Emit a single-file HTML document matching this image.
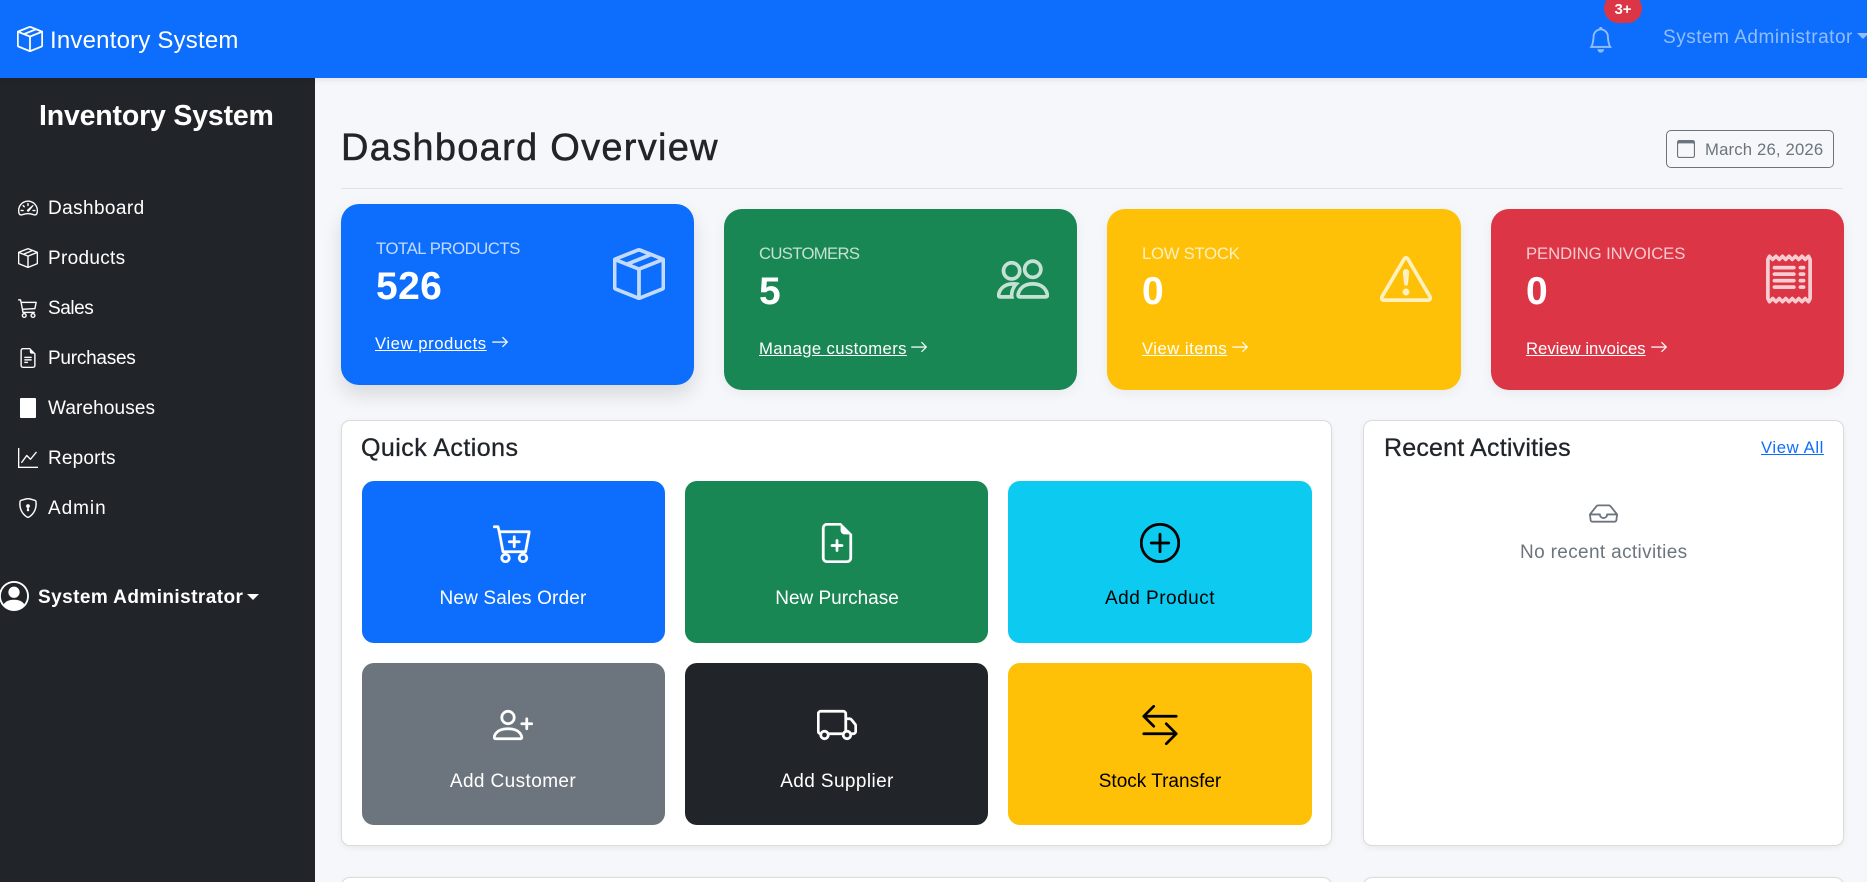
<!DOCTYPE html>
<html lang="en">
<head>
<meta charset="utf-8">
<title>Inventory System</title>
<style>
html,body{margin:0;padding:0;width:1867px;height:882px;overflow:hidden;background:#f5f7fb;font-family:"Liberation Sans",Arial,sans-serif;color:#212529}
#p{position:relative;width:1867px;height:882px;overflow:hidden}
.a{position:absolute}
.t{position:absolute;white-space:nowrap;line-height:30px;height:30px;margin-top:1px}
svg{position:absolute;display:block;fill:currentColor}
svg.s{stroke:currentColor;stroke-width:.12}
.nav{font-size:19px;color:#fff;left:48px}
.card{position:absolute;border-radius:18px;box-shadow:0 3px 12px rgba(0,0,0,.06)}
.lab{font-size:16.7px;color:rgba(255,255,255,.75)}
.val{font-size:39px;font-weight:bold;color:#fff}
.lnk{font-size:16.7px;color:#fff;text-decoration:underline}
.ico{color:rgba(255,255,255,.75)}
.wh{position:absolute;background:#fff;border:1px solid rgba(0,0,0,.14);border-radius:9px;box-shadow:0 2px 6px rgba(0,0,0,.06);box-sizing:border-box}
.btn{position:absolute;border-radius:12px;width:304px;height:162px}
.bl{font-size:19px;text-align:center;width:304px}
.h5{font-size:25px;color:#212529;-webkit-text-stroke:.3px #212529}
</style>
</head>
<body>
<div id="p">
<svg width="0" height="0" style="position:absolute">
<defs>
<symbol id="seam" viewBox="0 0 16 16"><path d="M8.186 1.113a.5.5 0 0 0-.372 0L1.846 3.5l2.404.961L10.404 2l-2.218-.887zm3.564 1.426L5.596 5 8 5.961 14.154 3.5l-2.404-.961zm3.25 1.7-6.5 2.6v7.922l6.5-2.6V4.24zM7.5 14.762V6.838L1 4.239v7.925l6.5 2.6zM7.443.184a1.5 1.5 0 0 1 1.114 0l7.129 2.852A.5.5 0 0 1 16 3.5v8.662a1 1 0 0 1-.629.928l-7.185 2.874a.5.5 0 0 1-.372 0L.63 13.09a1 1 0 0 1-.63-.928V3.5a.5.5 0 0 1 .314-.464L7.443.184z"/></symbol>
<symbol id="arr" viewBox="0 0 16 16"><path d="M1 8a.5.5 0 0 1 .5-.5h11.793l-3.147-3.146a.5.5 0 0 1 .708-.708l4 4a.5.5 0 0 1 0 .708l-4 4a.5.5 0 0 1-.708-.708L13.293 8.5H1.5A.5.5 0 0 1 1 8z"/></symbol>
</defs>
</svg>

<!-- sidebar -->
<div class="a" style="left:0;top:78px;width:315px;height:804px;background:#212529"></div>
<!-- navbar -->
<div class="a" style="left:0;top:0;width:1867px;height:78px;background:#0d6efd;box-shadow:0 2px 6px rgba(0,0,0,.08)"></div>

<svg class="s" style="left:17px;top:26px;color:#fff" width="26" height="26" viewBox="0 0 16 16"><use href="#seam"/></svg>
<div class="t" style="left:50px;top:25px;font-size:24px;color:#fff;letter-spacing:.2px">Inventory System</div>

<svg class="s" style="left:1588px;top:27px;color:rgba(255,255,255,.55)" width="25.5" height="25.5" viewBox="0 0 16 16"><path d="M8 16a2 2 0 0 0 2-2H6a2 2 0 0 0 2 2zM8 1.918l-.797.161A4.002 4.002 0 0 0 4 6c0 .628-.134 2.197-.459 3.742-.16.767-.376 1.566-.663 2.258h10.244c-.287-.692-.502-1.49-.663-2.258C12.134 8.197 12 6.628 12 6a4.002 4.002 0 0 0-3.203-3.92L8 1.917zM14.22 12c.223.447.481.801.78 1H1c.299-.199.557-.553.78-1C2.68 10.2 3 6.88 3 6c0-2.42 1.72-4.44 4.005-4.901a1 1 0 1 1 1.99 0A5.002 5.002 0 0 1 13 6c0 .88.32 4.2 1.22 6z"/></svg>
<div class="a" style="left:1604px;top:-6px;width:38px;height:29px;background:#dc3545;border-radius:15px"></div>
<div class="t" style="left:1604px;top:-6px;width:38px;text-align:center;font-size:15px;font-weight:bold;color:#fff">3+</div>
<div class="t" style="left:1663px;top:22px;font-size:19px;color:rgba(255,255,255,.55);letter-spacing:.52px">System Administrator</div>
<div class="a" style="left:1857px;top:33px;width:0;height:0;border-top:6px solid rgba(255,255,255,.55);border-left:6px solid transparent;border-right:6px solid transparent"></div>

<!-- sidebar content -->
<div class="t" style="left:39px;top:100px;font-size:28.5px;color:#fff;font-weight:bold;letter-spacing:-.18px">Inventory System</div>

<svg class="s" style="left:18px;top:198px;color:#fff" width="20" height="20" viewBox="0 0 16 16"><path d="M8 4a.5.5 0 0 1 .5.5V6a.5.5 0 0 1-1 0V4.5A.5.5 0 0 1 8 4zM3.732 5.732a.5.5 0 0 1 .707 0l.915.914a.5.5 0 1 1-.708.708l-.914-.915a.5.5 0 0 1 0-.707zM2 10a.5.5 0 0 1 .5-.5h1.586a.5.5 0 0 1 0 1H2.5A.5.5 0 0 1 2 10zm9.5 0a.5.5 0 0 1 .5-.5h1.5a.5.5 0 0 1 0 1H12a.5.5 0 0 1-.5-.5zm.754-4.246a.389.389 0 0 0-.527-.02L7.547 9.31a.91.91 0 1 0 1.302 1.258l3.434-4.297a.389.389 0 0 0-.029-.518z"/><path d="M0 10a8 8 0 1 1 15.547 2.661c-.442 1.253-1.845 1.602-2.932 1.25C11.309 13.488 9.475 13 8 13c-1.474 0-3.31.488-4.615.911-1.087.352-2.49.003-2.932-1.25A7.988 7.988 0 0 1 0 10zm8-7a7 7 0 0 0-6.603 9.329c.203.575.923.876 1.68.63C4.397 12.533 6.358 12 8 12s3.604.532 4.923.96c.757.245 1.477-.056 1.68-.631A7 7 0 0 0 8 3z"/></svg>
<div class="t nav" style="top:193px;letter-spacing:.4px">Dashboard</div>

<svg class="s" style="left:18px;top:248px;color:#fff" width="20" height="20" viewBox="0 0 16 16"><use href="#seam"/></svg>
<div class="t nav" style="top:243px;letter-spacing:.3px">Products</div>

<svg class="s" style="left:18px;top:298px;color:#fff" width="20" height="20" viewBox="0 0 16 16"><path d="M0 1.5A.5.5 0 0 1 .5 1H2a.5.5 0 0 1 .485.379L2.89 3H14.5a.5.5 0 0 1 .49.598l-1 5a.5.5 0 0 1-.465.401l-9.397.472L4.415 11H13a.5.5 0 0 1 0 1H4a.5.5 0 0 1-.491-.408L2.01 3.607 1.61 2H.5a.5.5 0 0 1-.5-.5zM3.102 4l.84 4.479 9.144-.459L13.89 4H3.102zM5 12a2 2 0 1 0 0 4 2 2 0 0 0 0-4zm7 0a2 2 0 1 0 0 4 2 2 0 0 0 0-4zm-7 1a1 1 0 1 1 0 2 1 1 0 0 1 0-2zm7 0a1 1 0 1 1 0 2 1 1 0 0 1 0-2z"/></svg>
<div class="t nav" style="top:293px;letter-spacing:-.45px">Sales</div>

<svg class="s" style="left:18px;top:348px;color:#fff" width="20" height="20" viewBox="0 0 16 16"><path d="M5.5 7a.5.5 0 0 0 0 1h5a.5.5 0 0 0 0-1h-5zM5 9.5a.5.5 0 0 1 .5-.5h5a.5.5 0 0 1 0 1h-5a.5.5 0 0 1-.5-.5zm0 2a.5.5 0 0 1 .5-.5h2a.5.5 0 0 1 0 1h-2a.5.5 0 0 1-.5-.5z"/><path d="M9.5 0H4a2 2 0 0 0-2 2v12a2 2 0 0 0 2 2h8a2 2 0 0 0 2-2V4.5L9.5 0zm0 1v2A1.5 1.5 0 0 0 11 4.5h2V14a1 1 0 0 1-1 1H4a1 1 0 0 1-1-1V2a1 1 0 0 1 1-1h5.5z"/></svg>
<div class="t nav" style="top:343px;letter-spacing:-.25px">Purchases</div>

<div class="a" style="left:20px;top:398px;width:16px;height:20px;background:#fff;border-radius:1px"></div>
<div class="t nav" style="top:393px;letter-spacing:.12px">Warehouses</div>

<svg class="s" style="left:18px;top:448px;color:#fff" width="20" height="20" viewBox="0 0 16 16"><path d="M0 0h1v15h15v1H0V0Zm14.817 3.113a.5.5 0 0 1 .07.704l-4.5 5.5a.5.5 0 0 1-.74.037L7.06 6.767l-3.656 5.027a.5.5 0 0 1-.808-.588l4-5.5a.5.5 0 0 1 .758-.06l2.609 2.61 4.15-5.073a.5.5 0 0 1 .704-.07Z"/></svg>
<div class="t nav" style="top:443px;letter-spacing:.17px">Reports</div>

<svg class="s" style="left:18px;top:498px;color:#fff" width="20" height="20" viewBox="0 0 16 16"><path d="M5.338 1.59a61.44 61.44 0 0 0-2.837.856.481.481 0 0 0-.328.39c-.554 4.157.726 7.19 2.253 9.188a10.725 10.725 0 0 0 2.287 2.233c.346.244.652.42.893.533.12.057.218.095.293.118a.55.55 0 0 0 .101.025.615.615 0 0 0 .1-.025c.076-.023.174-.061.294-.118.24-.113.547-.29.893-.533a10.726 10.726 0 0 0 2.287-2.233c1.527-1.997 2.807-5.031 2.253-9.188a.48.48 0 0 0-.328-.39c-.651-.213-1.75-.56-2.837-.855C9.552 1.29 8.531 1.067 8 1.067c-.53 0-1.552.223-2.662.524zM5.072.56C6.157.265 7.31 0 8 0s1.843.265 2.928.56c1.11.3 2.229.655 2.887.87a1.54 1.54 0 0 1 1.044 1.262c.596 4.477-.787 7.795-2.465 9.99a11.775 11.775 0 0 1-2.517 2.453 7.159 7.159 0 0 1-1.048.625c-.28.132-.581.24-.829.24s-.548-.108-.829-.24a7.158 7.158 0 0 1-1.048-.625 11.777 11.777 0 0 1-2.517-2.453C1.928 10.487.545 7.169 1.141 2.692A1.54 1.54 0 0 1 2.185 1.43 62.456 62.456 0 0 1 5.072.56z"/><path d="M9.5 6.5a1.5 1.5 0 0 1-1 1.415l.385 1.99a.5.5 0 0 1-.491.595h-.788a.5.5 0 0 1-.49-.595l.384-1.99a1.5 1.5 0 1 1 2-1.415z"/></svg>
<div class="t nav" style="top:493px;letter-spacing:.95px">Admin</div>

<svg style="left:-1px;top:581px;color:#fff" width="30" height="30" viewBox="0 0 16 16"><path d="M11 6a3 3 0 1 1-6 0 3 3 0 0 1 6 0z"/><path fill-rule="evenodd" d="M0 8a8 8 0 1 1 16 0A8 8 0 0 1 0 8zm8-7a7 7 0 0 0-5.468 11.37C3.242 11.226 4.805 10 8 10s4.757 1.225 5.468 2.37A7 7 0 0 0 8 1z"/></svg>
<div class="t" style="left:38px;top:582px;font-size:19px;font-weight:bold;color:#fff;letter-spacing:.43px">System Administrator</div>
<div class="a" style="left:247px;top:594px;width:0;height:0;border-top:6px solid #fff;border-left:6px solid transparent;border-right:6px solid transparent"></div>

<!-- header -->
<div class="t" style="left:341px;top:132px;font-size:38px;color:#212529;letter-spacing:1.28px;-webkit-text-stroke:.5px #212529">Dashboard Overview</div>
<div class="a" style="left:341px;top:188px;width:1502px;height:1px;background:#dee2e6"></div>
<div class="a" style="left:1666px;top:130px;width:168px;height:38px;border:1px solid #6c757d;border-radius:5px;box-sizing:border-box"></div>
<svg style="left:1677px;top:140px;color:#6c757d" width="18" height="18" viewBox="0 0 16 16"><path d="M14 0H2a2 2 0 0 0-2 2v12a2 2 0 0 0 2 2h12a2 2 0 0 0 2-2V2a2 2 0 0 0-2-2zM1 3.857C1 3.384 1.448 3 2 3h12c.552 0 1 .384 1 .857v10.286c0 .473-.448.857-1 .857H2c-.552 0-1-.384-1-.857V3.857z"/></svg>
<div class="t" style="left:1705px;top:134px;font-size:16.7px;color:#6c757d;letter-spacing:.17px">March 26, 2026</div>

<!-- stat cards -->
<div class="card" style="left:341px;top:204px;width:353px;height:181px;background:#0d6efd;box-shadow:0 10px 20px rgba(0,0,0,.12)"></div>
<div class="t lab" style="left:376px;top:233px;letter-spacing:-.42px">TOTAL PRODUCTS</div>
<div class="t val" style="left:376px;top:271px;letter-spacing:.4px">526</div>
<div class="t lnk" style="left:375px;top:328px;letter-spacing:.55px">View products</div>
<svg class="s" style="left:491px;top:333px;color:#fff" width="18" height="18" viewBox="0 0 16 16"><use href="#arr"/></svg>
<svg class="ico s" style="left:613px;top:248px" width="52" height="52" viewBox="0 0 16 16"><use href="#seam"/></svg>

<div class="card" style="left:724px;top:209px;width:353px;height:181px;background:#198754"></div>
<div class="t lab" style="left:759px;top:238px;letter-spacing:-.66px">CUSTOMERS</div>
<div class="t val" style="left:759px;top:276px">5</div>
<div class="t lnk" style="left:759px;top:333px;letter-spacing:.37px">Manage customers</div>
<svg class="s" style="left:910px;top:338px;color:#fff" width="18" height="18" viewBox="0 0 16 16"><use href="#arr"/></svg>
<svg class="ico s" style="left:997px;top:253px" width="52" height="52" viewBox="0 0 16 16"><path d="M15 14s1 0 1-1-1-4-5-4-5 3-5 4 1 1 1 1h8Zm-7.978-1A.261.261 0 0 1 7 12.996c.001-.264.167-1.03.76-1.72C8.312 10.629 9.282 10 11 10c1.717 0 2.687.63 3.24 1.276.593.69.758 1.457.76 1.72l-.008.002a.274.274 0 0 1-.014.002H7.022ZM11 7a2 2 0 1 0 0-4 2 2 0 0 0 0 4Zm3-2a3 3 0 1 1-6 0 3 3 0 0 1 6 0ZM6.936 9.28a5.88 5.88 0 0 0-1.23-.247A7.35 7.35 0 0 0 5 9c-4 0-5 3-5 4 0 .667.333 1 1 1h4.216A2.238 2.238 0 0 1 5 13c0-1.01.377-2.042 1.09-2.904.243-.294.526-.569.846-.816ZM4.92 10A5.493 5.493 0 0 0 4 13H1c0-.26.164-1.03.76-1.724.545-.636 1.492-1.256 3.16-1.275ZM1.5 5.5a3 3 0 1 1 6 0 3 3 0 0 1-6 0Zm3-2a2 2 0 1 0 0 4 2 2 0 0 0 0-4Z"/></svg>

<div class="card" style="left:1107px;top:209px;width:354px;height:181px;background:#ffc107"></div>
<div class="t lab" style="left:1142px;top:238px;letter-spacing:-.26px">LOW STOCK</div>
<div class="t val" style="left:1142px;top:276px">0</div>
<div class="t lnk" style="left:1142px;top:333px;letter-spacing:.48px">View items</div>
<svg class="s" style="left:1231px;top:338px;color:#fff" width="18" height="18" viewBox="0 0 16 16"><use href="#arr"/></svg>
<svg class="ico s" style="left:1380px;top:253px" width="52" height="52" viewBox="0 0 16 16"><path d="M7.938 2.016A.13.13 0 0 1 8.002 2a.13.13 0 0 1 .063.016.146.146 0 0 1 .054.057l6.857 11.667c.036.06.035.124.002.183a.163.163 0 0 1-.054.06.116.116 0 0 1-.066.017H1.146a.115.115 0 0 1-.066-.017.163.163 0 0 1-.054-.06.176.176 0 0 1 .002-.183L7.884 2.073a.147.147 0 0 1 .054-.057zm1.044-.45a1.13 1.13 0 0 0-1.96 0L.165 13.233c-.457.778.091 1.767.98 1.767h13.713c.889 0 1.438-.99.98-1.767L8.982 1.566z"/><path d="M7.002 12a1 1 0 1 1 2 0 1 1 0 0 1-2 0zM7.1 5.995a.905.905 0 1 1 1.8 0l-.35 3.507a.552.552 0 0 1-1.1 0L7.1 5.995z"/></svg>

<div class="card" style="left:1491px;top:209px;width:353px;height:181px;background:#dc3545"></div>
<div class="t lab" style="left:1526px;top:238px;letter-spacing:-.07px">PENDING INVOICES</div>
<div class="t val" style="left:1526px;top:276px">0</div>
<div class="t lnk" style="left:1526px;top:333px">Review invoices</div>
<svg class="s" style="left:1650px;top:338px;color:#fff" width="18" height="18" viewBox="0 0 16 16"><use href="#arr"/></svg>
<svg class="ico s" style="left:1763px;top:253px" width="52" height="52" viewBox="0 0 16 16"><path d="M1.92.506a.5.5 0 0 1 .434.14L3 1.293l.646-.647a.5.5 0 0 1 .708 0L5 1.293l.646-.647a.5.5 0 0 1 .708 0L7 1.293l.646-.647a.5.5 0 0 1 .708 0L9 1.293l.646-.647a.5.5 0 0 1 .708 0l.646.647.646-.647a.5.5 0 0 1 .708 0l.646.647.646-.647a.5.5 0 0 1 .801.13l.5 1A.5.5 0 0 1 15 2v12a.5.5 0 0 1-.053.224l-.5 1a.5.5 0 0 1-.8.13L13 14.707l-.646.647a.5.5 0 0 1-.708 0L11 14.707l-.646.647a.5.5 0 0 1-.708 0L9 14.707l-.646.647a.5.5 0 0 1-.708 0L7 14.707l-.646.647a.5.5 0 0 1-.708 0L5 14.707l-.646.647a.5.5 0 0 1-.708 0L3 14.707l-.646.647a.5.5 0 0 1-.801-.13l-.5-1A.5.5 0 0 1 1 14V2a.5.5 0 0 1 .053-.224l.5-1a.5.5 0 0 1 .367-.27zm.217 1.338L2 2.118v11.764l.137.274.51-.51a.5.5 0 0 1 .707 0l.646.647.646-.646a.5.5 0 0 1 .708 0l.646.646.646-.646a.5.5 0 0 1 .708 0l.646.646.646-.646a.5.5 0 0 1 .708 0l.646.646.646-.646a.5.5 0 0 1 .708 0l.646.646.646-.646a.5.5 0 0 1 .708 0l.509.509.137-.274V2.118l-.137-.274-.51.51a.5.5 0 0 1-.707 0L12 1.707l-.646.647a.5.5 0 0 1-.708 0L10 1.707l-.646.647a.5.5 0 0 1-.708 0L8 1.707l-.646.647a.5.5 0 0 1-.708 0L6 1.707l-.646.647a.5.5 0 0 1-.708 0L4 1.707l-.646.647a.5.5 0 0 1-.708 0l-.509-.51z"/><path d="M3 4.5a.5.5 0 0 1 .5-.5h6a.5.5 0 1 1 0 1h-6a.5.5 0 0 1-.5-.5zm0 2a.5.5 0 0 1 .5-.5h6a.5.5 0 1 1 0 1h-6a.5.5 0 0 1-.5-.5zm0 2a.5.5 0 0 1 .5-.5h6a.5.5 0 1 1 0 1h-6a.5.5 0 0 1-.5-.5zm0 2a.5.5 0 0 1 .5-.5h6a.5.5 0 0 1 0 1h-6a.5.5 0 0 1-.5-.5zm8-6a.5.5 0 0 1 .5-.5h1a.5.5 0 0 1 0 1h-1a.5.5 0 0 1-.5-.5zm0 2a.5.5 0 0 1 .5-.5h1a.5.5 0 0 1 0 1h-1a.5.5 0 0 1-.5-.5zm0 2a.5.5 0 0 1 .5-.5h1a.5.5 0 0 1 0 1h-1a.5.5 0 0 1-.5-.5zm0 2a.5.5 0 0 1 .5-.5h1a.5.5 0 0 1 0 1h-1a.5.5 0 0 1-.5-.5z"/></svg>

<!-- quick actions -->
<div class="wh" style="left:341px;top:420px;width:991px;height:426px"></div>
<div class="t h5" style="left:361px;top:432px;letter-spacing:.46px">Quick Actions</div>

<div class="btn" style="left:362px;top:481px;background:#0d6efd;width:303px"></div>
<svg class="s" style="left:493px;top:523px;color:#fff" width="40" height="40" viewBox="0 0 16 16"><path d="M9 5.5a.5.5 0 0 0-1 0V7H6.5a.5.5 0 0 0 0 1H8v1.5a.5.5 0 0 0 1 0V8h1.5a.5.5 0 0 0 0-1H9V5.5z"/><path d="M.5 1a.5.5 0 0 0 0 1h1.11l.401 1.607 1.498 7.985A.5.5 0 0 0 4 12h1a2 2 0 1 0 0 4 2 2 0 0 0 0-4h7a2 2 0 1 0 0 4 2 2 0 0 0 0-4h1a.5.5 0 0 0 .491-.408l1.5-8A.5.5 0 0 0 14.5 3H2.89l-.405-1.621A.5.5 0 0 0 2 1H.5zm3.915 10L3.102 4h10.796l-1.313 7h-8.17zM6 14a1 1 0 1 1-2 0 1 1 0 0 1 2 0zm7 0a1 1 0 1 1-2 0 1 1 0 0 1 2 0z"/></svg>
<div class="t bl" style="left:361px;top:583px;color:#fff;letter-spacing:.15px">New Sales Order</div>

<div class="btn" style="left:685px;top:481px;background:#198754;width:303px"></div>
<svg class="s" style="left:817px;top:523px;color:#fff" width="40" height="40" viewBox="0 0 16 16"><path d="M8 6.5a.5.5 0 0 1 .5.5v1.5H10a.5.5 0 0 1 0 1H8.5V11a.5.5 0 0 1-1 0V9.5H6a.5.5 0 0 1 0-1h1.5V7a.5.5 0 0 1 .5-.5z"/><path d="M14 4.5V14a2 2 0 0 1-2 2H4a2 2 0 0 1-2-2V2a2 2 0 0 1 2-2h5.5L14 4.5zm-3 0A1.5 1.5 0 0 1 9.5 3V1H4a1 1 0 0 0-1 1v12a1 1 0 0 0 1 1h8a1 1 0 0 0 1-1V4.5h-2z"/></svg>
<div class="t bl" style="left:685px;top:583px;color:#fff">New Purchase</div>

<div class="btn" style="left:1008px;top:481px;background:#0dcaf0"></div>
<svg class="s" style="left:1140px;top:523px;color:#000" width="40" height="40" viewBox="0 0 16 16"><path d="M8 15A7 7 0 1 1 8 1a7 7 0 0 1 0 14zm0 1A8 8 0 1 0 8 0a8 8 0 0 0 0 16z"/><path d="M8 4a.5.5 0 0 1 .5.5v3h3a.5.5 0 0 1 0 1h-3v3a.5.5 0 0 1-1 0v-3h-3a.5.5 0 0 1 0-1h3v-3A.5.5 0 0 1 8 4z"/></svg>
<div class="t bl" style="left:1008px;top:583px;color:#000;letter-spacing:.5px">Add Product</div>

<div class="btn" style="left:362px;top:663px;background:#6c757d;width:303px"></div>
<svg class="s" style="left:493px;top:705px;color:#fff" width="40" height="40" viewBox="0 0 16 16"><path d="M6 8a3 3 0 1 0 0-6 3 3 0 0 0 0 6zm2-3a2 2 0 1 1-4 0 2 2 0 0 1 4 0zm4 8c0 1-1 1-1 1H1s-1 0-1-1 1-4 6-4 6 3 6 4zm-1-.004c-.001-.246-.154-.986-.832-1.664C9.516 10.68 8.289 10 6 10c-2.29 0-3.516.68-4.168 1.332-.678.678-.83 1.418-.832 1.664h10z"/><path d="M13.5 5a.5.5 0 0 1 .5.5V7h1.5a.5.5 0 0 1 0 1H14v1.5a.5.5 0 0 1-1 0V8h-1.5a.5.5 0 0 1 0-1H13V5.5a.5.5 0 0 1 .5-.5z"/></svg>
<div class="t bl" style="left:361px;top:766px;color:#fff;letter-spacing:.4px">Add Customer</div>

<div class="btn" style="left:685px;top:663px;background:#212529;width:303px"></div>
<svg class="s" style="left:817px;top:705px;color:#fff" width="40" height="40" viewBox="0 0 16 16"><path d="M0 3.5A1.5 1.5 0 0 1 1.5 2h9A1.5 1.5 0 0 1 12 3.5V5h1.02a1.5 1.5 0 0 1 1.17.563l1.481 1.85a1.5 1.5 0 0 1 .329.938V10.5a1.5 1.5 0 0 1-1.5 1.5H14a2 2 0 1 1-4 0H5a2 2 0 1 1-3.998-.085A1.5 1.5 0 0 1 0 10.5v-7zm1.294 7.456A1.999 1.999 0 0 1 4.732 11h5.536a2.01 2.01 0 0 1 .732-.732V3.5a.5.5 0 0 0-.5-.5h-9a.5.5 0 0 0-.5.5v7a.5.5 0 0 0 .294.456zM12 10a2 2 0 0 1 1.732 1h.768a.5.5 0 0 0 .5-.5V8.35a.5.5 0 0 0-.11-.312l-1.48-1.85A.5.5 0 0 0 13.02 6H12v4zm-9 1a1 1 0 1 0 0 2 1 1 0 0 0 0-2zm9 0a1 1 0 1 0 0 2 1 1 0 0 0 0-2z"/></svg>
<div class="t bl" style="left:685px;top:766px;color:#fff;letter-spacing:.4px">Add Supplier</div>

<div class="btn" style="left:1008px;top:663px;background:#ffc107"></div>
<svg class="s" style="left:1140px;top:705px;color:#000" width="40" height="40" viewBox="0 0 16 16"><path d="M1 11.5a.5.5 0 0 0 .5.5h11.793l-3.147 3.146a.5.5 0 0 0 .708.708l4-4a.5.5 0 0 0 0-.708l-4-4a.5.5 0 0 0-.708.708L13.293 11H1.5a.5.5 0 0 0-.5.5zm14-7a.5.5 0 0 1-.5.5H2.707l3.147 3.146a.5.5 0 1 1-.708.708l-4-4a.5.5 0 0 1 0-.708l4-4a.5.5 0 1 1 .708.708L2.707 4H14.5a.5.5 0 0 1 .5.5z"/></svg>
<div class="t bl" style="left:1008px;top:766px;color:#000">Stock Transfer</div>

<!-- recent -->
<div class="wh" style="left:1363px;top:420px;width:481px;height:426px"></div>
<div class="t h5" style="left:1384px;top:432px;letter-spacing:.2px">Recent Activities</div>
<div class="t" style="left:1761px;top:432px;font-size:16.7px;color:#0d6efd;text-decoration:underline;letter-spacing:.6px">View All</div>
<svg style="left:1589px;top:499px;color:#6c757d" width="29" height="29" viewBox="0 0 16 16"><path d="M4.98 4a.5.5 0 0 0-.39.188L1.54 8H6a.5.5 0 0 1 .5.5 1.5 1.5 0 1 0 3 0A.5.5 0 0 1 10 8h4.46l-3.05-3.812A.5.5 0 0 0 11.02 4H4.98zm9.954 5H10.45a2.5 2.5 0 0 1-4.9 0H1.066l.32 2.562a.5.5 0 0 0 .497.438h12.234a.5.5 0 0 0 .496-.438L14.933 9zM3.809 3.563A1.5 1.5 0 0 1 4.981 3h6.038a1.5 1.5 0 0 1 1.172.563l3.7 4.625a.5.5 0 0 1 .105.374l-.39 3.124A1.5 1.5 0 0 1 14.117 13H1.883a1.5 1.5 0 0 1-1.489-1.314l-.39-3.124a.5.5 0 0 1 .106-.374l3.7-4.625z"/></svg>
<div class="t" style="left:1520px;top:537px;font-size:19px;color:#6c757d;letter-spacing:.35px">No recent activities</div>

<!-- lower cards -->
<div class="wh" style="left:341px;top:877px;width:991px;height:40px"></div>
<div class="wh" style="left:1363px;top:877px;width:481px;height:40px"></div>
</div>
</body>
</html>
